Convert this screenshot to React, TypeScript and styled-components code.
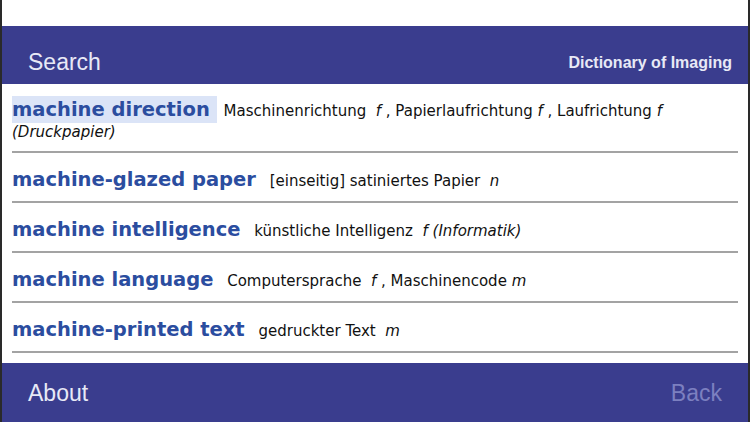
import React from "react";
import styled, { createGlobalStyle } from "styled-components";

const GlobalStyle = createGlobalStyle`
  html, body {
    margin: 0;
    padding: 0;
    background: #ffffff;
  }
  #root {
    width: 750px;
    height: 422px;
  }
`;

const Frame = styled.div`
  box-sizing: border-box;
  width: 750px;
  height: 422px;
  display: flex;
  flex-direction: column;
  border-left: 2px solid #2a2a2a;
  border-right: 2px solid #2a2a2a;
  background: #ffffff;
  overflow: hidden;
`;

const StatusGap = styled.div`
  height: 26px;
  flex: none;
`;

const Bar = styled.div<{ $h: number; $top: number; $right: number }>`
  box-sizing: border-box;
  flex: none;
  height: ${(p) => p.$h}px;
  background: #3a3d8e;
  display: flex;
  align-items: center;
  justify-content: space-between;
  padding: ${(p) => p.$top}px ${(p) => p.$right}px 0 26px;
`;

const BarButton = styled.span<{ $dim?: boolean }>`
  font-family: "Liberation Sans", Arial, sans-serif;
  font-size: 23px;
  color: ${(p) => (p.$dim ? "#7c80c0" : "#e8e9f6")};
`;

const Title = styled.span`
  font-family: "Liberation Sans", Arial, sans-serif;
  font-weight: bold;
  font-size: 16px;
  color: #e8e9f6;
  padding-top: 2px;
`;

const List = styled.div`
  flex: 1;
  padding: 0 10px 0 10px;
`;

const Row = styled.div<{ $first?: boolean }>`
  box-sizing: border-box;
  height: ${(p) => (p.$first ? "69px" : "50px")};
  border-bottom: 2px solid #a3a3a3;
  padding-top: ${(p) => (p.$first ? "14px" : "15px")};
  font-family: "DejaVu Sans", Verdana, sans-serif;
  font-size: 15px;
  line-height: 24px;
  color: #111111;
  white-space: nowrap;
  overflow: hidden;
`;

const Head = styled.span<{ $selected?: boolean }>`
  font-family: "DejaVu Sans", Verdana, sans-serif;
  font-weight: bold;
  font-size: 19.5px;
  color: #2b4d9f;
  background: ${(p) => (p.$selected ? "#dbe4f7" : "transparent")};
  padding: 2px 7px 2px 0;
  margin-right: 2px;
`;

const Sub = styled.div`
  font-style: italic;
  line-height: 18px;
`;

const G = styled.i`
  font-style: italic;
`;

export default function App() {
  return (
    <>
      <GlobalStyle />
      <Frame>
        <StatusGap />
        <Bar $h={58} $top={14} $right={16}>
          <BarButton>Search</BarButton>
          <Title>Dictionary of Imaging</Title>
        </Bar>
        <List>
          <Row $first>
            <Head $selected>machine direction</Head> Maschinenrichtung{" "}
            <G>&nbsp;f</G> , Papierlaufrichtung <G>f</G> , Laufrichtung <G>f</G>
            <Sub>(Druckpapier)</Sub>
          </Row>
          <Row>
            <Head>machine-glazed paper</Head> [einseitig] satiniertes Papier{" "}
            <G>&nbsp;n</G>
          </Row>
          <Row>
            <Head>machine intelligence</Head> künstliche Intelligenz{" "}
            <G>&nbsp;f (Informatik)</G>
          </Row>
          <Row>
            <Head>machine language</Head> Computersprache <G>&nbsp;f</G> ,
            Maschinencode <G>m</G>
          </Row>
          <Row>
            <Head>machine-printed text</Head> gedruckter Text <G>&nbsp;m</G>
          </Row>
        </List>
        <Bar $h={59} $top={2} $right={26}>
          <BarButton>About</BarButton>
          <BarButton $dim>Back</BarButton>
        </Bar>
      </Frame>
    </>
  );
}
